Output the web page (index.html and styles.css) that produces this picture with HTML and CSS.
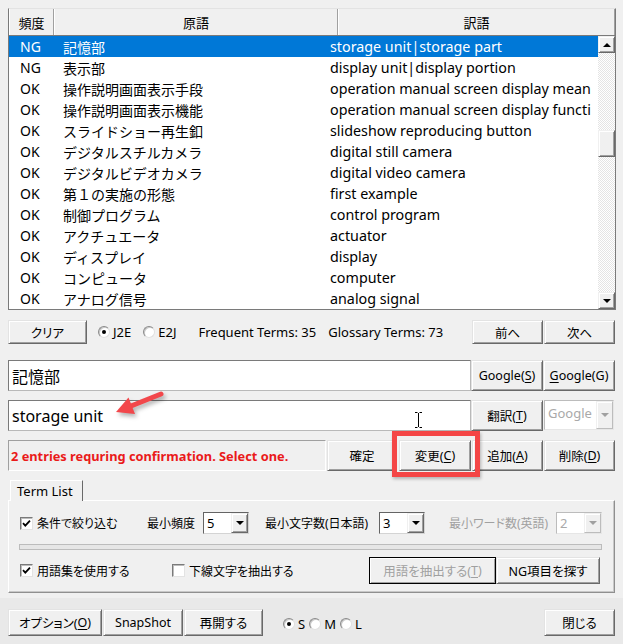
FILE: index.html
```html
<!DOCTYPE html>
<html>
<head>
<meta charset="utf-8">
<link rel="stylesheet" href="styles.css">
</head>
<body>
<div class="app">
  <div class="main">
    <div class="list">
      <div class="lhead">
        <div class="hc hc1">頻度</div>
        <div class="hc hc2">原語</div>
        <div class="hc hc3">訳語</div>
      </div>
      <div class="lbody">
        <div class="rows">
          <div class="row sel"><span class="f">NG</span><span class="s">記憶部</span><span class="t">storage unit|storage part</span></div>
          <div class="row"><span class="f">NG</span><span class="s">表示部</span><span class="t">display unit|display portion</span></div>
          <div class="row"><span class="f">OK</span><span class="s">操作説明画面表示手段</span><span class="t">operation manual screen display mean</span></div>
          <div class="row"><span class="f">OK</span><span class="s">操作説明画面表示機能</span><span class="t">operation manual screen display functi</span></div>
          <div class="row"><span class="f">OK</span><span class="s">スライドショー再生釦</span><span class="t">slideshow reproducing button</span></div>
          <div class="row"><span class="f">OK</span><span class="s">デジタルスチルカメラ</span><span class="t">digital still camera</span></div>
          <div class="row"><span class="f">OK</span><span class="s">デジタルビデオカメラ</span><span class="t">digital video camera</span></div>
          <div class="row"><span class="f">OK</span><span class="s">第１の実施の形態</span><span class="t">first example</span></div>
          <div class="row"><span class="f">OK</span><span class="s">制御プログラム</span><span class="t">control program</span></div>
          <div class="row"><span class="f">OK</span><span class="s">アクチュエータ</span><span class="t">actuator</span></div>
          <div class="row"><span class="f">OK</span><span class="s">ディスプレイ</span><span class="t">display</span></div>
          <div class="row"><span class="f">OK</span><span class="s">コンピュータ</span><span class="t">computer</span></div>
          <div class="row"><span class="f">OK</span><span class="s">アナログ信号</span><span class="t">analog signal</span></div>
        </div>
        <div class="vscroll">
          <div class="sbtn"><span class="tri-up"></span></div>
          <div class="thumb"></div>
          <div class="sbtn"><span class="tri-down"></span></div>
        </div>
      </div>
    </div>

    <div class="toolbar">
      <div class="btn w-clear">クリア</div>
      <label class="radio r-j2e"><span class="rb on"></span>J2E</label>
      <label class="radio r-e2j"><span class="rb"></span>E2J</label>
      <span class="stat st1">Frequent Terms: 35</span>
      <span class="stat st2">Glossary Terms: 73</span>
      <div class="btn w-nav push">前へ</div>
      <div class="btn w-nav">次へ</div>
    </div>

    <div class="inrow">
      <div class="tbox">記憶部</div>
      <div class="btn w-g1">Google(<u>S</u>)</div>
      <div class="btn w-g2"><u>G</u>oogle(G)</div>
    </div>

    <div class="inrow r2">
      <div class="tbox">storage unit</div>
      <div class="btn w-g1">翻訳(<u>T</u>)</div>
      <div class="combo dis wide"><span class="cv">Google</span><span class="dd"><span class="tri-down"></span></span></div>
    </div>

    <div class="inrow r2">
      <div class="status">2 entries requring confirmation. Select one.</div>
      <div class="btn w-a">確定</div>
      <div class="btn w-b">変更(<u>C</u>)</div>
      <div class="btn w-c">追加(<u>A</u>)</div>
      <div class="btn w-d">削除(<u>D</u>)</div>
    </div>

    <div class="tabs">
      <div class="tab">Term List</div>
    </div>
    <div class="panel">
      <div class="prow">
        <label class="chk c-filter"><span class="cb"><svg viewBox="0 0 11 11" width="11" height="11"><path d="M2 5.2 L4.3 7.6 L9 2.6" fill="none" stroke="#000" stroke-width="1.8"/></svg></span>条件で絞り込む</label>
        <span class="plabel pl1">最小頻度</span>
        <div class="combo"><span class="cv">5</span><span class="dd"><span class="tri-down"></span></span></div>
        <span class="plabel pl2">最小文字数(日本語)</span>
        <div class="combo"><span class="cv">3</span><span class="dd"><span class="tri-down"></span></span></div>
        <span class="plabel pl3 grey">最小ワード数(英語)</span>
        <div class="combo dis"><span class="cv">2</span><span class="dd"><span class="tri-down"></span></span></div>
      </div>
      <div class="progress"></div>
      <div class="prow p2">
        <label class="chk c-use"><span class="cb"><svg viewBox="0 0 11 11" width="11" height="11"><path d="M2 5.2 L4.3 7.6 L9 2.6" fill="none" stroke="#000" stroke-width="1.8"/></svg></span>用語集を使用する</label>
        <label class="chk c-ul"><span class="cb"></span>下線文字を抽出する</label>
        <div class="btn w-ext dflt">用語を抽出する(<u>T</u>)</div>
        <div class="btn w-ng">NG項目を探す</div>
      </div>
    </div>
  </div>

  <div class="footer">
    <div class="btn w-opt">オプション(<u>O</u>)</div>
    <div class="btn w-snap">SnapShot</div>
    <div class="btn w-re">再開する</div>
    <label class="radio fr first"><span class="rb on"></span>S</label>
    <label class="radio fr"><span class="rb"></span>M</label>
    <label class="radio fr"><span class="rb"></span>L</label>
    <div class="btn w-close push">閉じる</div>
  </div>

  <div class="redbox"></div>
  <svg class="overlay" width="623" height="644" viewBox="0 0 623 644">
    <g class="arrow">
      <line x1="161" y1="394" x2="131" y2="406" stroke="#f2474b" stroke-width="5" stroke-linecap="round"/>
      <polygon points="116,412 135,414 128.5,397.5" fill="#f2474b"/>
    </g>
    <g class="ibeam" stroke="#000" stroke-width="1" fill="none">
      <path d="M415 412.5 H417.5 M419.5 412.5 H422 M418.5 413 V427 M415 427.5 H417.5 M419.5 427.5 H422"/>
    </g>
  </svg>
</div>
</body>
</html>
```

FILE: styles.css
```css
* { box-sizing: border-box; }
html, body { margin: 0; padding: 0; }
body {
  background: #f0f0f0;
  font-family: "Noto Sans", "Noto Sans CJK JP", sans-serif;
  font-size: 12px;
  color: #000;
}
.app {
  position: relative;
  width: 623px;
  height: 644px;
  overflow: hidden;
  background: #f0f0f0;
  display: flex;
  flex-direction: column;
}
.main {
  padding: 8px 8px 0 8px;
  font-feature-settings: "palt";
}

/* ---------- list ---------- */
.list {
  width: 608px;
  height: 302px;
  border: 1px solid #7a7a7a;
  border-top-color: #e3e3e3;
  background: #fff;
  display: flex;
  flex-direction: column;
  font-feature-settings: normal;
}
.lhead {
  display: grid;
  grid-template-columns: 45px 284px 1fr;
  height: 27px;
  flex: none;
  background: #f0f0f0;
  border-bottom: 1px solid #7a7a7a;
}
.hc {
  display: flex;
  align-items: center;
  justify-content: center;
  font-size: 13px;
  border-left: 1px solid #fff;
  border-right: 1px solid #a0a0a0;
  font-feature-settings: "palt";
}
.lbody {
  flex: 1;
  display: flex;
  min-height: 0;
}
.rows {
  flex: 1;
  overflow: hidden;
}
.row {
  height: 21px;
  display: flex;
  align-items: center;
  font-size: 14px;
  white-space: nowrap;
  overflow: hidden;
}
.row.sel { background: #0078d7; color: #fff; }
.row .f { width: 54px; padding-left: 11px; flex: none; }
.row .s { width: 267px; flex: none; }
.row .t { flex: none; font-size: 14.3px; }

.vscroll {
  width: 17px;
  flex: none;
  display: flex;
  flex-direction: column;
  background: repeating-conic-gradient(#ffffff 0 25%, #e4e4e4 0 50%) 0 0 / 2px 2px;
}
.sbtn {
  height: 17px;
  flex: none;
  background: #f0f0f0;
  border: 1px solid;
  border-color: #f0f0f0 #696969 #696969 #f0f0f0;
  box-shadow: inset 1px 1px #fff, inset -1px -1px #a0a0a0;
  display: flex;
  align-items: center;
  justify-content: center;
}
.sbtn:last-child { margin-top: auto; }
.thumb {
  height: 27px;
  margin-top: 77px;
  background: #f0f0f0;
  border: 1px solid;
  border-color: #f0f0f0 #696969 #696969 #f0f0f0;
  box-shadow: inset 1px 1px #fff, inset -1px -1px #a0a0a0;
}
.tri-up {
  width: 0; height: 0;
  border-left: 4px solid transparent;
  border-right: 4px solid transparent;
  border-bottom: 4px solid #000;
}
.tri-down {
  width: 0; height: 0;
  border-left: 4px solid transparent;
  border-right: 4px solid transparent;
  border-top: 4px solid #000;
}

/* ---------- buttons ---------- */
.btn {
  display: flex;
  align-items: center;
  justify-content: center;
  flex: none;
  background: #f0f0f0;
  border: 1px solid;
  border-color: #e3e3e3 #696969 #696969 #e3e3e3;
  box-shadow: inset 1px 1px #fff, inset -1px -1px #a0a0a0;
  font-size: 12.5px;
  white-space: nowrap;
}
.btn u { text-underline-offset: 2px; }
.push { margin-left: auto; }

/* ---------- toolbar ---------- */
.toolbar {
  margin-top: 10px;
  height: 24px;
  display: flex;
  align-items: center;
  width: 607px;
}
.w-clear { width: 79px; height: 24px; }
.w-nav { width: 71px; height: 24px; }
.w-nav + .w-nav { margin-left: 1px; }
.radio {
  display: flex;
  align-items: center;
  font-size: 13px;
  white-space: nowrap;
}
.rb {
  width: 12px;
  height: 12px;
  border-radius: 50%;
  background: #fff;
  border: 1px solid;
  border-color: #8a8a8a #e0e0e0 #e0e0e0 #8a8a8a;
  box-shadow: inset 1px 1px #c8c8c8;
  display: inline-flex;
  align-items: center;
  justify-content: center;
  margin-right: 3px;
  flex: none;
}
.rb.on::after {
  content: "";
  width: 4px;
  height: 4px;
  border-radius: 50%;
  background: #000;
}
.r-j2e { margin-left: 11px; }
.r-e2j { margin-left: 12px; }
.stat { font-size: 13px; white-space: nowrap; }
.st1 { margin-left: 22px; }
.st2 { margin-left: 12px; }

/* ---------- input rows ---------- */
.inrow {
  margin-top: 16px;
  height: 31px;
  display: flex;
  width: 607px;
}
.inrow.r2 { margin-top: 9px; }
.tbox {
  width: 463px;
  height: 31px;
  background: #fff;
  border: 1px solid;
  border-color: #7a7a7a #b9b9b9 #b9b9b9 #7a7a7a;
  font-size: 16px;
  padding-left: 3px;
  display: flex;
  align-items: center;
  font-feature-settings: normal;
}
.w-g1 { width: 72px; height: 31px; }
.w-g2 { width: 72px; height: 31px; }
.combo {
  width: 46px;
  height: 22px;
  background: #fff;
  border: 1px solid;
  border-color: #646464 #d4d4d4 #d4d4d4 #646464;
  display: flex;
  align-items: stretch;
  font-size: 13px;
  flex: none;
}
.combo .cv { flex: 1; padding-left: 3px; display: flex; align-items: center; }
.combo .dd {
  width: 17px;
  flex: none;
  background: #f0f0f0;
  border: 1px solid;
  border-color: #f0f0f0 #696969 #696969 #f0f0f0;
  box-shadow: inset 1px 1px #fff, inset -1px -1px #a0a0a0;
  display: flex;
  align-items: center;
  justify-content: center;
}
.combo.dis { border-color: #bcbcbc #e6e6e6 #e6e6e6 #bcbcbc; }
.combo.dis .cv { color: #a9a9a9; }
.combo.dis .tri-down { border-top-color: #a0a0a0; }
.combo.dis .dd { border-color: #f0f0f0 #bcbcbc #bcbcbc #f0f0f0; box-shadow: inset 1px 1px #fff; }
.combo.wide {
  width: 70px;
  height: 30px;
  margin-left: 1px;
  font-size: 13px;
}
.combo.wide .cv { align-items: flex-start; padding-top: 3px; }

.status {
  width: 319px;
  height: 31px;
  border: 1px solid;
  border-color: #a0a0a0 #fff #fff #a0a0a0;
  background: #f0f0f0;
  color: #ea1a1a;
  font-weight: bold;
  font-size: 12.8px;
  padding-left: 2px;
  display: flex;
  align-items: center;
  white-space: nowrap;
  overflow: hidden;
}
.w-a { width: 70px; height: 31px; margin-left: 1px; }
.w-b { width: 72px; height: 31px; margin-left: 2px; }
.w-c { width: 71px; height: 31px; margin-left: 1px; }
.w-d { width: 71px; height: 31px; margin-left: 1px; }

/* ---------- tab panel ---------- */
.tabs {
  margin-top: 9px;
  height: 20px;
  display: flex;
  padding-left: 2px;
  position: relative;
  z-index: 1;
}
.tab {
  width: 73px;
  height: 21px;
  background: #f0f0f0;
  border: 1px solid;
  border-bottom: none;
  border-color: #fff #696969 transparent #fff;
  font-size: 13px;
  padding-left: 6px;
  display: flex;
  align-items: center;
  font-feature-settings: normal;
}
.panel {
  width: 607px;
  height: 93px;
  border: 1px solid;
  border-color: #fff #8f8f8f #8f8f8f #fff;
  box-shadow: inset -1px -1px #c8c8c8;
  padding: 11px 0 0 10px;
}
.prow {
  height: 22px;
  display: flex;
  align-items: center;
}
.prow.p2 { height: 27px; margin-top: 7px; }
.chk {
  display: flex;
  align-items: center;
  font-size: 12px;
  white-space: nowrap;
  flex: none;
}
.cb {
  width: 13px;
  height: 13px;
  background: #fff;
  border: 1px solid;
  border-color: #7a7a7a #e3e3e3 #e3e3e3 #7a7a7a;
  box-shadow: inset 1px 1px #bcbcbc;
  margin-right: 4px;
  display: inline-flex;
  align-items: center;
  justify-content: center;
  flex: none;
}
.cb svg { display: block; }
.c-filter { margin-left: 1px; width: 127px; }
.c-use { margin-left: 1px; width: 152px; }
.plabel { font-size: 12px; white-space: nowrap; flex: none; }
.pl1 { width: 56px; }
.pl2 { margin-left: 16px; width: 114px; }
.pl3 { margin-left: 24px; width: 107px; }
.grey { color: #a0a0a0; }
.progress {
  margin-top: 10px;
  width: 583px;
  height: 6px;
  border: 1px solid #bcbcbc;
  background: #e6e6e6;
}
.w-ext { width: 127px; height: 27px; margin-left: auto; color: #a0a0a0; }
.w-ext.dflt { border: 1px solid #000; box-shadow: inset 1px 1px #fff, inset -1px -1px #a0a0a0; }
.w-ng { width: 104px; height: 27px; margin-right: 14px; }

/* ---------- footer ---------- */
.footer {
  margin-top: 5px;
  flex: 1;
  background: #e9e9e9;
  padding: 11px 8px 0 8px;
  display: flex;
  align-items: flex-start;
  font-feature-settings: "palt";
}
.footer .btn { height: 27px; }
.w-opt { width: 94px; }
.w-snap { width: 80px; margin-left: 1px; }
.w-re { width: 79px; margin-left: 1px; }
.w-close { width: 71px; }
.radio.fr { height: 27px; font-size: 13px; margin-left: 4px; padding-top: 3px; }
.radio.fr.first { margin-left: 20px; }

/* ---------- overlays ---------- */
.redbox {
  position: absolute;
  left: 392px;
  top: 431px;
  width: 88px;
  height: 46px;
  border: 5px solid #f44646;
  box-shadow: 1px 2px 3px rgba(0,0,0,0.25);
}
.overlay {
  position: absolute;
  left: 0;
  top: 0;
  pointer-events: none;
}
.arrow { filter: drop-shadow(2px 3px 2px rgba(0,0,0,0.3)); }
```
